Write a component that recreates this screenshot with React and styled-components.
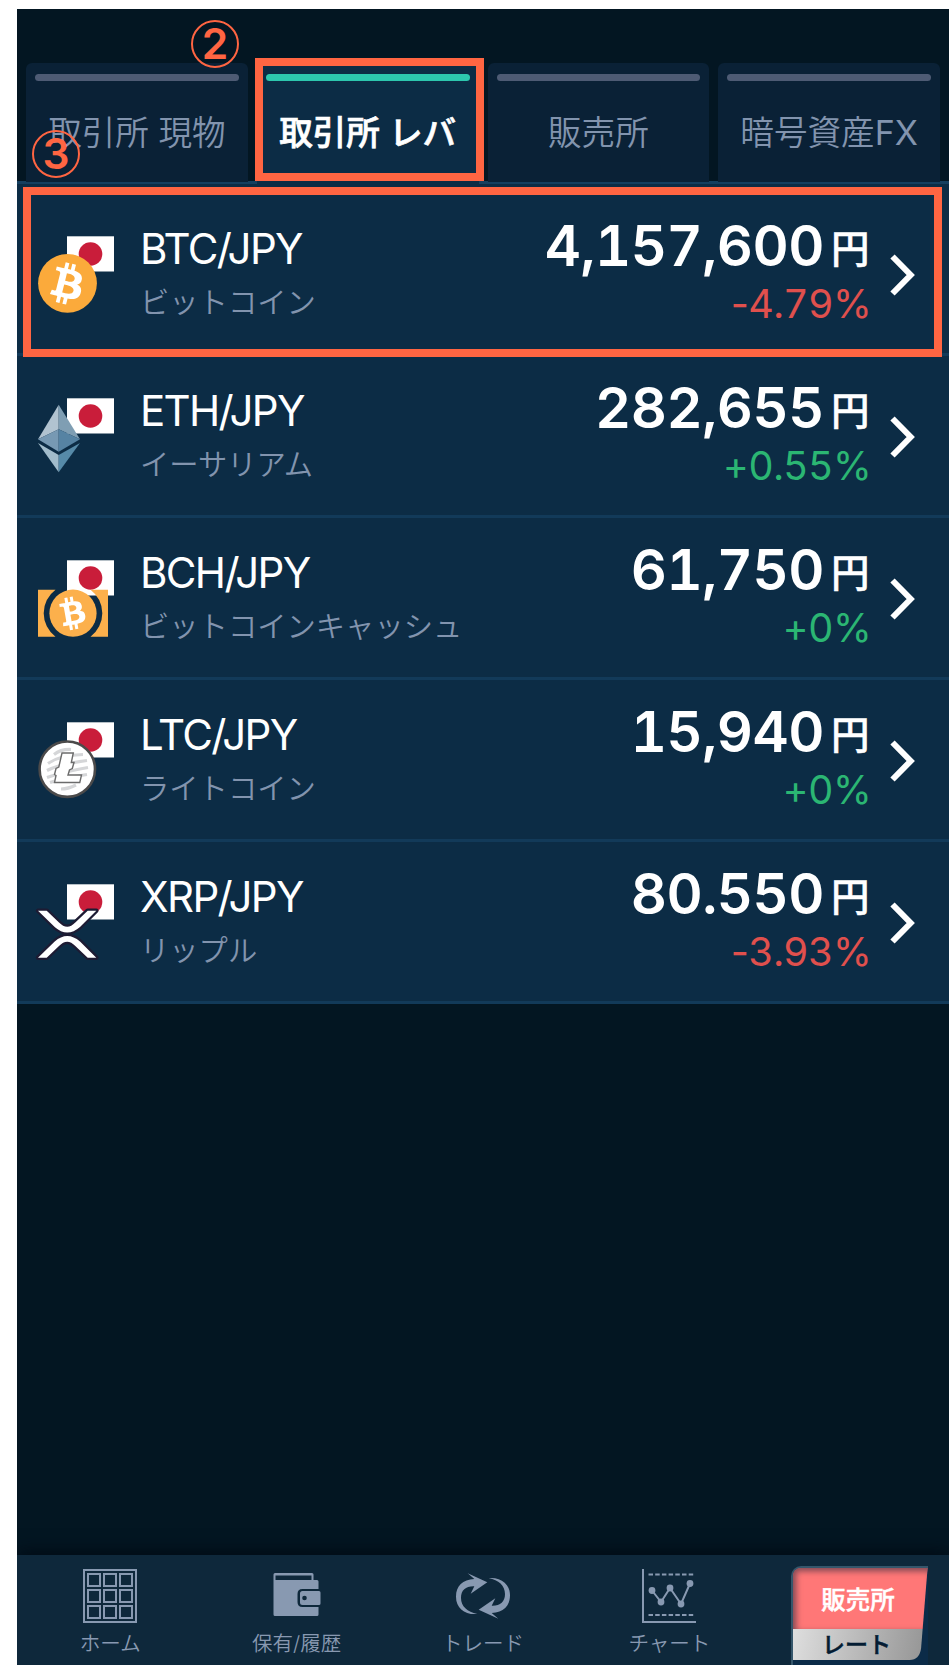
import React from 'react';
import styled, {createGlobalStyle} from 'styled-components';
import {FaBitcoin} from 'react-icons/fa';

const GlobalStyle = createGlobalStyle`
  body {
    margin: 0;
    background: #fff;
    font-family: Inter, 'Noto Sans CJK JP', sans-serif;
  }
`;

const Screen = styled.main`
  display: flex;
  flex-direction: column;
  position: relative;
  box-sizing: border-box;
  height: 1656px;
  margin: 9px 0 0 17px;
  background: #031622;
  overflow: hidden;
`;

const Tabs = styled.nav`
  display: grid;
  grid-template-columns: repeat(4, 1fr);
  column-gap: 9px;
  height: 121px;
  padding: 54px 9px 0;
  background: linear-gradient(#153f5f, #153f5f) 0 100% / 100% 3px no-repeat;
`;

const Tab = styled.div`
  display: flow-root;
  height: ${({active}) => (active ? 121 : 119)}px;
  border-radius: 6px 6px 0 0;
  background: ${({active}) => (active ? '#0c2c45' : '#0a2136')};
  color: ${({active}) => (active ? '#fff' : '#8294ae')};
  font-size: 33.6px;
  font-weight: ${({active}) => (active ? 500 : 350)};
  line-height: 40px;
  text-align: center;
  white-space: nowrap;
  -webkit-text-stroke: ${({active}) => (active ? '0.7px' : '0')};
  &:before {
    content: '';
    display: block;
    height: 7px;
    margin: 11px 9px 32px;
    border-radius: 4px;
    background: ${({active}) => (active ? '#2dc7ae' : '#4e5b74')};
  }
`;

const Latin = styled.span`
  font-size: 34px;
  font-weight: 400;
`;

const List = styled.ul`
  margin: 0;
  padding: 10px 0 0;
  list-style: none;
  background: #0c2c45;
`;

const Row = styled.li`
  display: flex;
  align-items: flex-start;
  box-sizing: border-box;
  height: 162px;
  padding: 0 32px 0 17px;
  border-bottom: 3px solid #123a59;
`;

const CoinIcon = styled.svg`
  flex: none;
  width: 80px;
  height: 90px;
  margin-top: 36px;
`;

const Names = styled.div`
  margin: 30px 0 0 26px;
`;

const Pair = styled.div`
  font-size: 42px;
  letter-spacing: -1.65px;
  line-height: 50px;
  color: #fff;
`;

const CoinName = styled.div`
  margin-top: 9px;
  font-size: 29.3px;
  font-weight: 350;
  line-height: 40px;
  color: #8294ae;
`;

const Quote = styled.div`
  margin: 22px 0 0 auto;
  text-align: right;
`;

const Price = styled.div`
  font-size: 56px;
  font-weight: 600;
  font-variant-numeric: tabular-nums;
  letter-spacing: -0.5px;
  line-height: 60px;
  color: #fff;
`;

const Yen = styled.span`
  position: relative;
  top: -3px;
  margin-left: 7px;
  font-size: 38.5px;
  font-weight: 500;
  -webkit-text-stroke: 0.5px;
`;

const Change = styled.div`
  margin-right: -2px;
  font-size: 39.5px;
  letter-spacing: -0.7px;
  line-height: 44px;
  color: ${({down}) => (down ? '#e0504d' : '#2bb673')};
`;

const Figure = styled.span`
  font-variant-numeric: tabular-nums;
`;

const Chevron = styled.svg`
  flex: none;
  width: 28px;
  height: 44px;
  margin: 59px 0 0 20px;
`;

const BottomNav = styled.nav`
  display: grid;
  grid-template-columns: repeat(5, 1fr);
  height: 110px;
  margin-top: auto;
  background: #0e283b;
  box-shadow: 0 -3px 16px #010a14;
`;

const NavItem = styled.div`
  display: flex;
  flex-direction: column;
  align-items: center;
  padding-top: 14px;
  color: #8899b1;
  font-size: 20.5px;
  font-weight: 350;
  line-height: 30px;
  svg {
    width: 54px;
    height: 54px;
    margin-bottom: 6px;
  }
`;

const SwitchFrame = styled.div`
  width: 135px;
  height: 97px;
  margin: 11px 0 0 28px;
  border: solid #35566b;
  border-width: 2px 0 0 2px;
  border-radius: 10px 0 0 0;
  background: #0b2b48;
  overflow: hidden;
`;

const SwitchFace = styled.div`
  height: 92px;
  font-weight: 500;
  text-align: center;
  -webkit-text-stroke: 0.5px;
  clip-path: path('M0 0 H135 L128.500 80 Q127 92 117 92 H0 Z');
`;

const SaleHalf = styled.div`
  box-sizing: border-box;
  height: 61px;
  padding-right: 4px;
  background: #ff7777;
  box-shadow: inset 3px 3px 6px #7b4853;
  color: #fff;
  font-size: 24.5px;
  line-height: 64px;
`;

const RateHalf = styled.div`
  box-sizing: border-box;
  height: 31px;
  padding-right: 7px;
  background: linear-gradient(100deg, #dedede, #939393);
  color: #041c33;
  font-size: 23px;
  line-height: 33px;
`;

const Outline = styled.div`
  position: absolute;
  left: ${({x}) => x}px;
  top: ${({y}) => y}px;
  box-sizing: border-box;
  width: ${({w}) => w}px;
  height: ${({h}) => h}px;
  border: 8px solid #ff6542;
`;

const Step = styled.div`
  position: absolute;
  left: ${({x}) => x}px;
  top: ${({y}) => y}px;
  box-sizing: border-box;
  width: 48px;
  height: 48px;
  border: 2px solid #ff6542;
  border-radius: 50%;
  color: #ff6542;
  font-size: 42.5px;
  font-weight: 600;
  line-height: 44px;
  text-align: center;
`;

const Bitcoin = () => (
  <>
    <clipPath id="btc-disc">
      <circle cx="67.500" cy="283.300" r="29.400" />
    </clipPath>
    <g clipPath="url(#btc-disc)">
      <circle cx="67.500" cy="283.300" r="27" fill="#fff" />
      <FaBitcoin x="33" y="249.500" size="69" color="#fbaa3b" />
    </g>
  </>
);

const Ethereum = () => (
  <>
    <path d="M58.700 242.700 38 277.300 58.700 267.300Z" fill="#b1c3d0" />
    <path d="M58.700 242.700 80 277.300 58.700 267.300Z" fill="#7f9eb3" />
    <path d="M38 277.300 58.700 267.300V289.700Z" fill="#7799b3" />
    <path d="M80 277.300 58.700 267.300V289.700Z" fill="#5683a3" />
    <path d="M38 281 58.700 293V310.200Z" fill="#a2bccb" />
    <path d="M80 281 58.700 293V310.200Z" fill="#568aa8" />
  </>
);

const BitcoinCash = () => (
  <>
    <path d="M38 265.700H55.500A29.300 29.300 0 0 0 55.500 312.700H38Z" fill="#fcb04c" />
    <path d="M108 265.700H90.500A29.300 29.300 0 0 1 90.500 312.700H108Z" fill="#fcb04c" />
    <clipPath id="bch-disc">
      <circle cx="73" cy="289.200" r="23.600" />
    </clipPath>
    <g clipPath="url(#bch-disc)">
      <circle cx="73" cy="289.200" r="22" fill="#fff" />
      <g transform="rotate(-24 73 289.200)">
        <FaBitcoin x="45.200" y="261.700" size="55" color="#fcb04c" />
      </g>
    </g>
  </>
);

const Litecoin = () => (
  <>
    <circle cx="67.300" cy="283.200" r="27.700" fill="#fff" stroke="#4b4a4a" strokeWidth="2.600" />
    <g stroke="#d5d6d8" strokeWidth="3.200" fill="none">
      <path d="M54 268.500Q61 263 71 263.500" />
      <path d="M48 277.500Q60 269 83 268.500" />
      <path d="M47 284.500Q60 278 87 274.500" />
      <path d="M47 291.500Q62 286 88 281.500" />
      <path d="M50 296.500Q64 292 87 288.500" />
      <path d="M61 303Q68 303 76 299" />
    </g>
    <path
      d="M62 267H73.300L71.300 276.500H74L72.300 282.500L69.500 284L68 289H81.500L79.800 296.500H54.500L56 289.500L54.500 288.500L56 282.500L58.800 281Z"
      fill="#fff"
      stroke="#6b6b6b"
      strokeWidth="1.400"
    />
  </>
);

const Ripple = () => (
  <g fill="#fff" stroke="#1d1b33" strokeWidth="4.500" strokeLinejoin="round" paintOrder="stroke">
    <path d="M38 262.700H46.700L59 274.500Q67.200 283 75.300 274.500L87.700 262.700H96.300L80 279Q67.200 290 54.700 279Z" />
    <path d="M38 309.700H46.700L59 297.900Q67.200 289.400 75.300 297.900L87.700 309.700H96.300L80 293.400Q67.200 282.400 54.700 293.400Z" />
  </g>
);

const pairs = [
  {pair: 'BTC/JPY', name: 'ビットコイン', price: '4,157,600', change: '-4.79%', Logo: Bitcoin},
  {pair: 'ETH/JPY', name: 'イーサリアム', price: '282,655', change: '+0.55%', Logo: Ethereum},
  {pair: 'BCH/JPY', name: 'ビットコインキャッシュ', price: '61,750', change: '+0%', Logo: BitcoinCash},
  {pair: 'LTC/JPY', name: 'ライトコイン', price: '15,940', change: '+0%', Logo: Litecoin},
  {pair: 'XRP/JPY', name: 'リップル', price: '80.550', change: '-3.93%', Logo: Ripple}
];

const PairRow = ({pair, name, price, change, Logo}) => (
  <Row>
    <CoinIcon viewBox="34 230 80 90" aria-hidden="true">
      <rect x="67" y="236.300" width="47" height="35.200" fill="#fff" />
      <circle cx="90.500" cy="254" r="11.800" fill="#c91d3a" />
      <Logo />
    </CoinIcon>
    <Names>
      <Pair>{pair}</Pair>
      <CoinName>{name}</CoinName>
    </Names>
    <Quote>
      <Price>{price}<Yen>円</Yen></Price>
      <Change down={change.startsWith('-')}>
        {change[0]}<Figure>{change.slice(1, -1)}</Figure>%
      </Change>
    </Quote>
    <Chevron viewBox="0 0 28 44" fill="none" stroke="#fff" strokeWidth="6" aria-hidden="true">
      <path d="M3.500 3.500 21.700 22 3.500 40.500" />
    </Chevron>
  </Row>
);

const HomeIcon = () => (
  <svg viewBox="0 0 54 54" fill="none" stroke="currentColor" strokeWidth="2">
    <rect x="1" y="1" width="52" height="52" />
    {[5, 21, 37].map(y => [5, 21, 37].map(x => (
      <rect key={`${x}-${y}`} x={x} y={y} width="12" height="12" />
    )))}
  </svg>
);

const WalletIcon = () => (
  <svg viewBox="2.500 0 54 54">
    <path d="M6.500 4H44.500Q46 4 46 5.500V11H49.500Q51 11 51 12.500V20H35Q30 20 30 25V33Q30 38 35 38H51V45.500Q51 47 49.500 47H7.500Q6 47 6 45.500V5.500Q6 4 7.500 4ZM8 6.500V11H44V6.500Z" fill="currentColor" fillRule="evenodd" />
    <path d="M35 22H51.500Q53 22 53 23.500V34.500Q53 36 51.500 36H35Q32.500 36 32.500 33.500V24.500Q32.500 22 35 22ZM37 26.700A2.300 2.300 0 1 0 37 31.300 2.300 2.300 0 1 0 37 26.700Z" fill="currentColor" fillRule="evenodd" />
  </svg>
);

const swoosh = 'M292 222C255 225 228 205 228 170C228 138 248 118 283 117L263 100L322 127L272 161L283 139C258 138 243 150 243 174C243 200 262 215 292 222Z';

const TradeIcon = () => (
  <svg viewBox="228 87 162 162" fill="currentColor">
    <path d={swoosh} />
    <path d={swoosh} transform="rotate(180 309 168)" />
  </svg>
);

const ChartIcon = () => (
  <svg viewBox="0 0 54 54" fill="none" stroke="currentColor" strokeWidth="2">
    <path d="M1 0V53H54" />
    <path d="M6.500 5.500H52M6.500 46H52" strokeDasharray="4.500 2.200" />
    <path d="M10 21.500 19 33 28 19 39 35 48 14.500" />
    {[[10, 21.5], [19, 33], [28, 19], [39, 35], [48, 14.5]].map(([x, y]) => (
      <circle key={x} cx={x} cy={y} r="3.400" fill="currentColor" stroke="none" />
    ))}
  </svg>
);

const App = () => (
  <Screen>
    <GlobalStyle />
    <Tabs>
      <Tab>取引所 現物</Tab>
      <Tab active>取引所 レバ</Tab>
      <Tab>販売所</Tab>
      <Tab>暗号資産<Latin>FX</Latin></Tab>
    </Tabs>
    <List>
      {pairs.map(item => <PairRow key={item.pair} {...item} />)}
    </List>
    <BottomNav>
      <NavItem><HomeIcon />ホーム</NavItem>
      <NavItem><WalletIcon />保有/履歴</NavItem>
      <NavItem><TradeIcon />トレード</NavItem>
      <NavItem><ChartIcon />チャート</NavItem>
      <SwitchFrame>
        <SwitchFace>
          <SaleHalf>販売所</SaleHalf>
          <RateHalf>レート</RateHalf>
        </SwitchFace>
      </SwitchFrame>
    </BottomNav>
    <Outline x={238} y={49} w={229} h={123} />
    <Outline x={6} y={178} w={919} h={170} />
    <Step x={174} y={11}>2</Step>
    <Step x={15} y={121}>3</Step>
  </Screen>
);

export default App;
